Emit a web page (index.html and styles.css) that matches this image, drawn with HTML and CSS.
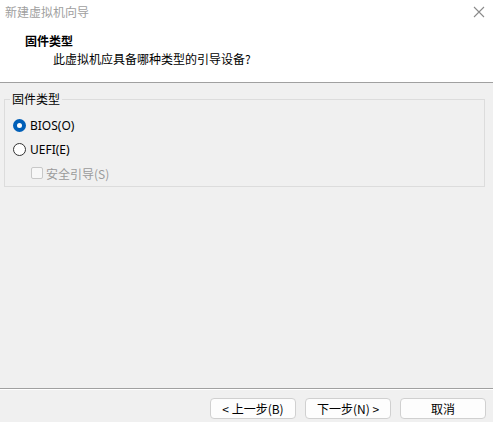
FILE: index.html
```html
<!DOCTYPE html>
<html lang="zh-CN">
<head>
<meta charset="utf-8">
<link rel="stylesheet" href="styles.css">
</head>
<body>
<div class="window">
  <div class="top">
    <div class="titlebar">
      <span class="title">新建虚拟机向导</span>
      <svg class="close" width="12" height="12" viewBox="0 0 12 12"><path d="M1 1L11 11M11 1L1 11" stroke="#8a8a8a" stroke-width="1.1" fill="none"/></svg>
    </div>
    <div class="header">
      <div class="h-title">固件类型</div>
      <div class="h-sub">此虚拟机应具备哪种类型的引导设备?</div>
    </div>
  </div>
  <div class="main">
    <fieldset class="group">
      <legend class="legend">固件类型</legend>
      <div class="row"><span class="radio checked"></span><span class="lbl">BIOS(O)</span></div>
      <div class="row"><span class="radio"></span><span class="lbl">UEFI(E)</span></div>
      <div class="row sub disabled"><span class="check"></span><span class="lbl">安全引导(S)</span></div>
    </fieldset>
  </div>
  <div class="footer">
    <button class="btn">&lt; 上一步(B)</button>
    <button class="btn">下一步(N) &gt;</button>
    <button class="btn">取消</button>
  </div>
</div>
</body>
</html>
```
FILE: styles.css
```css
* { box-sizing: border-box; }
html, body { margin: 0; padding: 0; }
body {
  width: 493px;
  height: 422px;
  overflow: hidden;
  background: #f0f0f0;
  font-family: "Noto Sans CJK SC", "Noto Sans", sans-serif;
  font-size: 12px;
  color: #000;
}
.window { display: flex; flex-direction: column; height: 422px; }
.top {
  background: #fff;
  height: 83px;
  border-bottom: 1px solid #a0a0a0;
}
.titlebar {
  height: 30px;
  display: flex;
  align-items: flex-start;
  justify-content: space-between;
  padding: 4px 8px 0 5px;
}
.title { color: #a0a0a0; font-size: 12px; line-height: 16px; }
.close { margin-top: 2px; }
.header { padding-left: 25px; }
.h-title { font-weight: bold; line-height: 18px; padding-top: 2px; }
.h-sub { padding-left: 28px; line-height: 18px; margin-top: 0; }
.main { flex: 1; padding: 8px 8px 0 4px; }
.group {
  margin: 0;
  padding: 0 0 8px 8px;
  border: 1px solid #dcdcdc;
  height: 96px;
}
.legend {
  padding: 0 2px;
  margin-left: -3px;
  line-height: 16px;
  color: #000;
}
.row {
  display: flex;
  align-items: center;
  height: 24px;
  gap: 4px;
}
.row:first-of-type { margin-top: 6px; }
.lbl { font-family: "Noto Sans", "Noto Sans CJK SC", sans-serif; }
.sub .lbl { font-family: "Noto Sans CJK SC", "Noto Sans", sans-serif; }
.radio {
  width: 13px;
  height: 13px;
  border-radius: 50%;
  border: 1px solid #333;
  background: #fff;
  flex: none;
}
.radio.checked {
  border: 4px solid #005fb8;
  background: #fff;
}
.sub { padding-left: 18px; gap: 3px; }
.check {
  width: 12px;
  height: 12px;
  border: 1px solid #c8c8c8;
  border-radius: 2px;
  background: #f7f7f7;
  flex: none;
}
.disabled .lbl { color: #9a9a9a; }
.footer {
  height: 34px;
  border-top: 1px solid #a0a0a0;
  box-shadow: inset 0 1px 0 #fff;
  display: flex;
  justify-content: flex-end;
  align-items: flex-start;
  gap: 9px;
  padding: 9px 7px 0 0;
}
.btn {
  width: 86px;
  height: 21px;
  border: 1px solid #d0d0d0;
  border-radius: 4px;
  background: #fdfdfd;
  font-family: "Noto Sans CJK SC", "Noto Sans", sans-serif;
  font-size: 12px;
  color: #000;
  padding: 0;
  line-height: 19px;
}
```
